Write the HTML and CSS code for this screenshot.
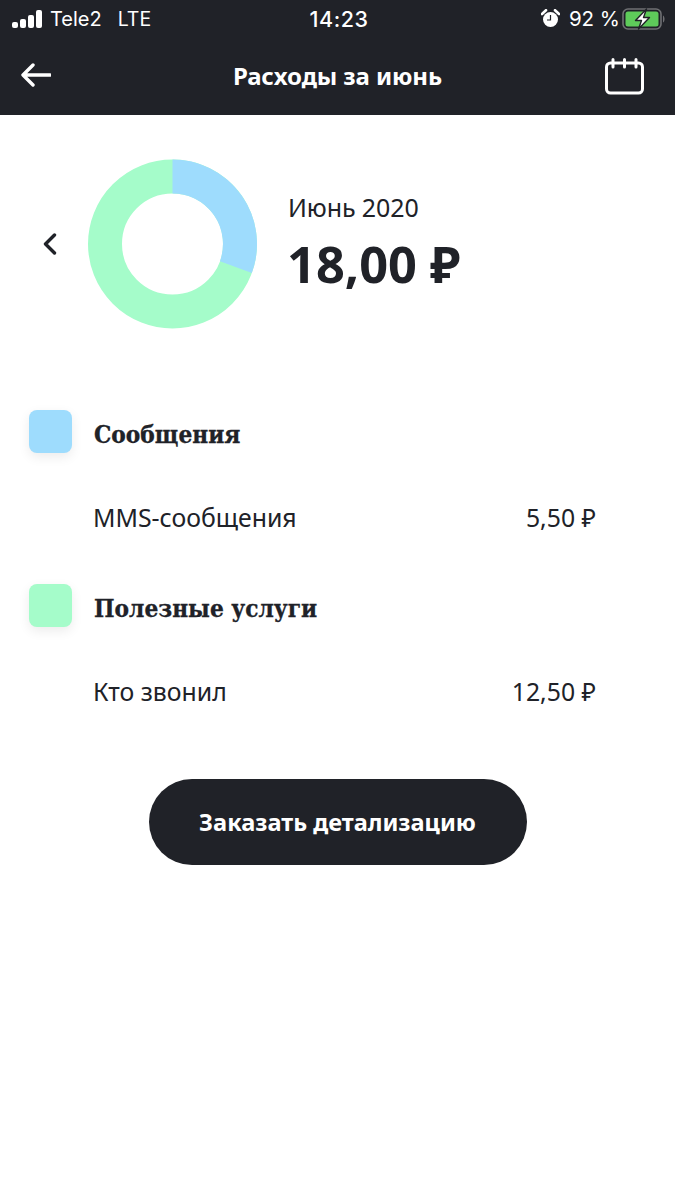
FILE: index.html
```html
<!DOCTYPE html>
<html lang="ru">
<head>
    <meta charset="UTF-8">
    <meta name="viewport" content="width=device-width, initial-scale=1.0">
    <link rel="stylesheet" href="styles.css">
    <title>Расходы за июнь</title>
</head>
<body>
    <div class="top">
        <div class="status-bar">
            <div class="status-left">
                <svg class="signal" width="31" height="18" viewBox="0 0 31 18">
                    <rect x="0" y="12" width="6" height="6" rx="2" fill="#fff"/>
                    <rect x="8" y="9" width="6" height="9" rx="2" fill="#fff"/>
                    <rect x="16" y="5" width="6" height="13" rx="2" fill="#fff"/>
                    <rect x="24" y="0" width="6" height="18" rx="2" fill="#fff"/>
                </svg>
                <span>Tele2</span>
                <span class="lte">LTE</span>
            </div>
            <div class="status-time">14:23</div>
            <div class="status-right">
                <svg class="alarm" width="19" height="19" viewBox="0 0 19 19">
                    <circle cx="9.5" cy="10.5" r="7.5" fill="#fff"/>
                    <path d="M1 5 L5 1.2 M14 1.2 L18 5" stroke="#fff" stroke-width="2.6" stroke-linecap="round"/>
                    <path d="M9.5 6 V11 H6" stroke="#202228" stroke-width="1.2" fill="none"/>
                </svg>
                <span>92 %</span>
                <svg class="battery" width="44" height="22" viewBox="0 0 44 22">
                    <rect x="1" y="1" width="38" height="20" rx="5" fill="none" stroke="#6f7073" stroke-width="1.6"/>
                    <rect x="3.5" y="3.5" width="33" height="15" rx="2.5" fill="#5ecb5a"/>
                    <path d="M41 7.5 c2 1 2 6 0 7 z" fill="#6f7073"/>
                    <path d="M24.5 1 L13.5 12.5 H19.5 L16.5 21 L27.5 9.5 H21.5 Z" fill="#fff" stroke="#202228" stroke-width="1.4" stroke-linejoin="round"/>
                </svg>
            </div>
        </div>
        <div class="nav">
            <svg class="nav-back" width="30" height="24" viewBox="0 0 30 24">
                <path d="M12 2 L2 12 L12 22 M2.5 12 H29" stroke="#fff" stroke-width="3.4" fill="none" stroke-linecap="round" stroke-linejoin="round"/>
            </svg>
            <h1>Расходы за июнь</h1>
            <svg class="nav-calendar" width="40" height="37" viewBox="0 0 40 37">
                <rect x="1.5" y="5" width="36" height="30" rx="4" fill="none" stroke="#fff" stroke-width="3"/>
                <path d="M8 1.5 V9 M19.5 1.5 V9 M31 1.5 V9" stroke="#fff" stroke-width="3" stroke-linecap="round"/>
            </svg>
        </div>
    </div>

    <div class="summary">
        <svg class="chevron" width="14" height="22" viewBox="0 0 14 22">
            <path d="M11.5 2 L2.5 11 L11.5 20" stroke="#202228" stroke-width="3.4" fill="none" stroke-linecap="round" stroke-linejoin="round"/>
        </svg>
        <svg class="donut" width="170" height="170" viewBox="0 0 170 170">
            <circle cx="84.5" cy="85" r="67.5" fill="none" stroke="#a5fcca" stroke-width="34"/>
            <path d="M84.5 17.5 A67.5 67.5 0 0 1 147.9 108.1" fill="none" stroke="#9edcfd" stroke-width="34"/>
        </svg>
        <div class="summary-text">
            <div class="month">Июнь 2020</div>
            <div class="total">18,00 ₽</div>
        </div>
    </div>

    <div class="category">
        <div class="swatch swatch-blue"></div>
        <h2>Сообщения</h2>
    </div>
    <div class="line">
        <span>MMS-сообщения</span>
        <span>5,50 ₽</span>
    </div>

    <div class="category">
        <div class="swatch swatch-green"></div>
        <h2>Полезные услуги</h2>
    </div>
    <div class="line">
        <span>Кто звонил</span>
        <span>12,50 ₽</span>
    </div>

    <div class="actions">
        <button>Заказать детализацию</button>
    </div>
</body>
</html>
```

FILE: styles.css
```css
body {
    font-family: "Noto Sans", "DejaVu Sans", sans-serif;
    background-color: #fff;
    color: #202228;
    margin: 0;
}

.top {
    background-color: #202228;
    color: #fff;
    height: 115px;
}

.status-bar {
    display: grid;
    grid-template-columns: 1fr auto 1fr;
    align-items: center;
    height: 37px;
    padding: 0 9px 0 12px;
    font-family: Inter, sans-serif;
    font-size: 20px;
}

.status-left,
.status-right {
    display: flex;
    align-items: center;
}

.status-left span {
    margin-left: 7px;
}

.status-left .lte {
    margin-left: 16px;
    font-size: 19.5px;
}

.status-right {
    justify-content: flex-end;
}

.status-right span {
    margin: 0 2px 0 9px;
    font-size: 20.5px;
}

.status-time {
    font-size: 21.5px;
    font-weight: 500;
    letter-spacing: 0.5px;
}

.nav {
    display: grid;
    grid-template-columns: 1fr auto 1fr;
    align-items: center;
    height: 78px;
    padding: 0 30px;
}

.nav-back {
    margin: 0 0 3px -9px;
}

.nav-calendar {
    justify-self: end;
}

.nav h1 {
    font-size: 24px;
    font-weight: 700;
    letter-spacing: -0.1px;
    margin: 0 0 2px;
}

.summary {
    display: flex;
    align-items: center;
    height: 170px;
    margin-top: 44px;
    padding-left: 43px;
}

.donut {
    margin-left: 31px;
}

.summary-text {
    margin-left: 30px;
}

.month {
    font-size: 25px;
    letter-spacing: -0.1px;
    line-height: 34px;
    margin-bottom: 6px;
}

.total {
    font-size: 50.5px;
    font-weight: 700;
    line-height: 68px;
    margin-left: -1px;
}

.category {
    display: flex;
    align-items: center;
    margin-top: 81px;
    padding-left: 29px;
}

.line + .category {
    margin-top: 47px;
}

.swatch {
    width: 43px;
    height: 43px;
    border-radius: 8px;
    box-shadow: 0 4px 12px rgba(0, 0, 0, 0.08);
}

.swatch-blue {
    background-color: #9edcfd;
}

.swatch-green {
    background-color: #a5fcca;
}

.category h2 {
    font-family: "DejaVu Serif Condensed", "DejaVu Serif", serif;
    font-stretch: condensed;
    font-size: 24.2px;
    font-weight: 700;
    -webkit-text-stroke: 0.3px #202228;
    margin: 5px 0 0 22px;
}

.line {
    display: flex;
    justify-content: space-between;
    margin-top: 44px;
    padding: 0 79px 0 93px;
    font-size: 24.8px;
    line-height: 40px;
}

.actions {
    display: flex;
    justify-content: center;
    margin-top: 68px;
}

button {
    background-color: #202228;
    color: #fff;
    border: none;
    width: 378px;
    height: 86px;
    border-radius: 43px;
    font-family: "Noto Sans", sans-serif;
    font-size: 23.6px;
    font-weight: 700;
}
```
